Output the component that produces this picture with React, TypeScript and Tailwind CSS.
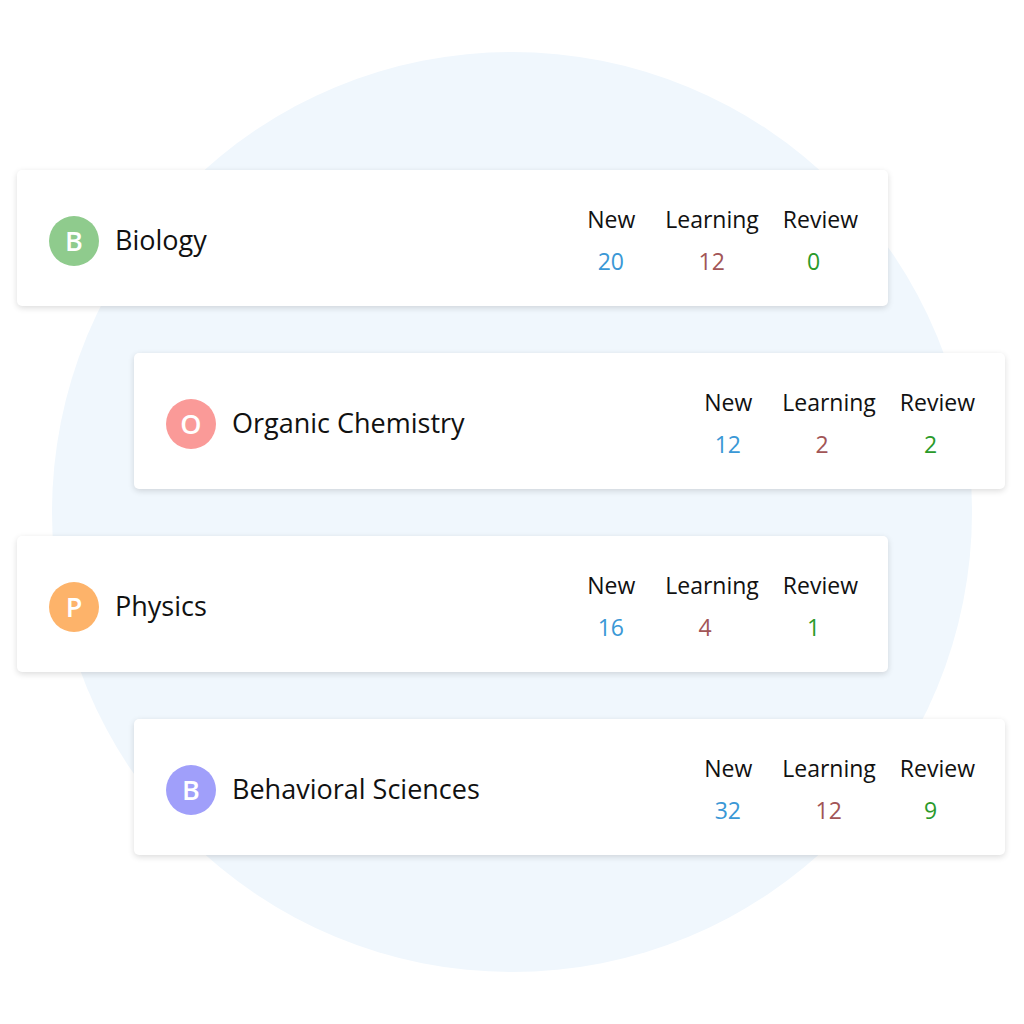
import React from "react";

type Deck = {
  letter: string;
  name: string;
  color: string;
  indent: string;
  stats: [string, string, string];
};

const decks: Deck[] = [
  { letter: "B", name: "Biology", color: "bg-[#8fcb8d]", indent: "ml-[17px]", stats: ["20", "12", "0"] },
  { letter: "O", name: "Organic Chemistry", color: "bg-[#fa9a98]", indent: "ml-[134px]", stats: ["12", "2", "2"] },
  { letter: "P", name: "Physics", color: "bg-[#fdb36a]", indent: "ml-[17px]", stats: ["16", "4", "1"] },
  { letter: "B", name: "Behavioral Sciences", color: "bg-[#a09ffa]", indent: "ml-[134px]", stats: ["32", "12", "9"] },
];

function Stat({ label, value, color, className }: { label: string; value: string; color: string; className?: string }) {
  return (
    <div className={`flex flex-col items-center ${className ?? ""}`}>
      <div className="text-[23px] leading-[28px] text-[#111]">{label}</div>
      <div className={`mt-[14px] w-[27px] text-left text-[23px] leading-[28px] ${color}`}>{value}</div>
    </div>
  );
}

function Card({ d }: { d: Deck }) {
  return (
    <div
      className={`${d.indent} relative z-10 flex h-[136px] w-[871px] items-center justify-between rounded-[5px] bg-white pl-[32px] pr-[30px] shadow-[0_2px_6px_rgba(0,0,0,0.14)]`}
    >
      <div className="flex items-center gap-[16px] pt-[5px]">
        <div
          className={`${d.color} flex h-[50px] w-[50px] items-center justify-center rounded-full text-[27px] font-semibold leading-none text-white`}
        >
          {d.letter}
        </div>
        <div className="text-[27px] text-[#111] leading-none pb-[2px]">{d.name}</div>
      </div>
      <div className="flex items-start pt-[4px]">
        <Stat label="New" value={d.stats[0]} color="text-[#3a98d6]" />
        <Stat label="Learning" value={d.stats[1]} color="text-[#a25556]" className="ml-[30px]" />
        <Stat label="Review" value={d.stats[2]} color="text-[#2a9a2a]" className="ml-[24px]" />
      </div>
    </div>
  );
}

export default function App() {
  return (
    <div
      className="relative h-[1024px] w-[1024px] overflow-hidden bg-white"
      style={{ fontFamily: '"Open Sans", "Noto Sans", sans-serif' }}
    >
      <div className="absolute left-[52px] top-[52px] h-[920px] w-[920px] rounded-full bg-[#f0f7fd]" />
      <div className="relative flex flex-col gap-[47px] pt-[170px]">
        {decks.map((d, i) => (
          <Card key={i} d={d} />
        ))}
      </div>
    </div>
  );
}
